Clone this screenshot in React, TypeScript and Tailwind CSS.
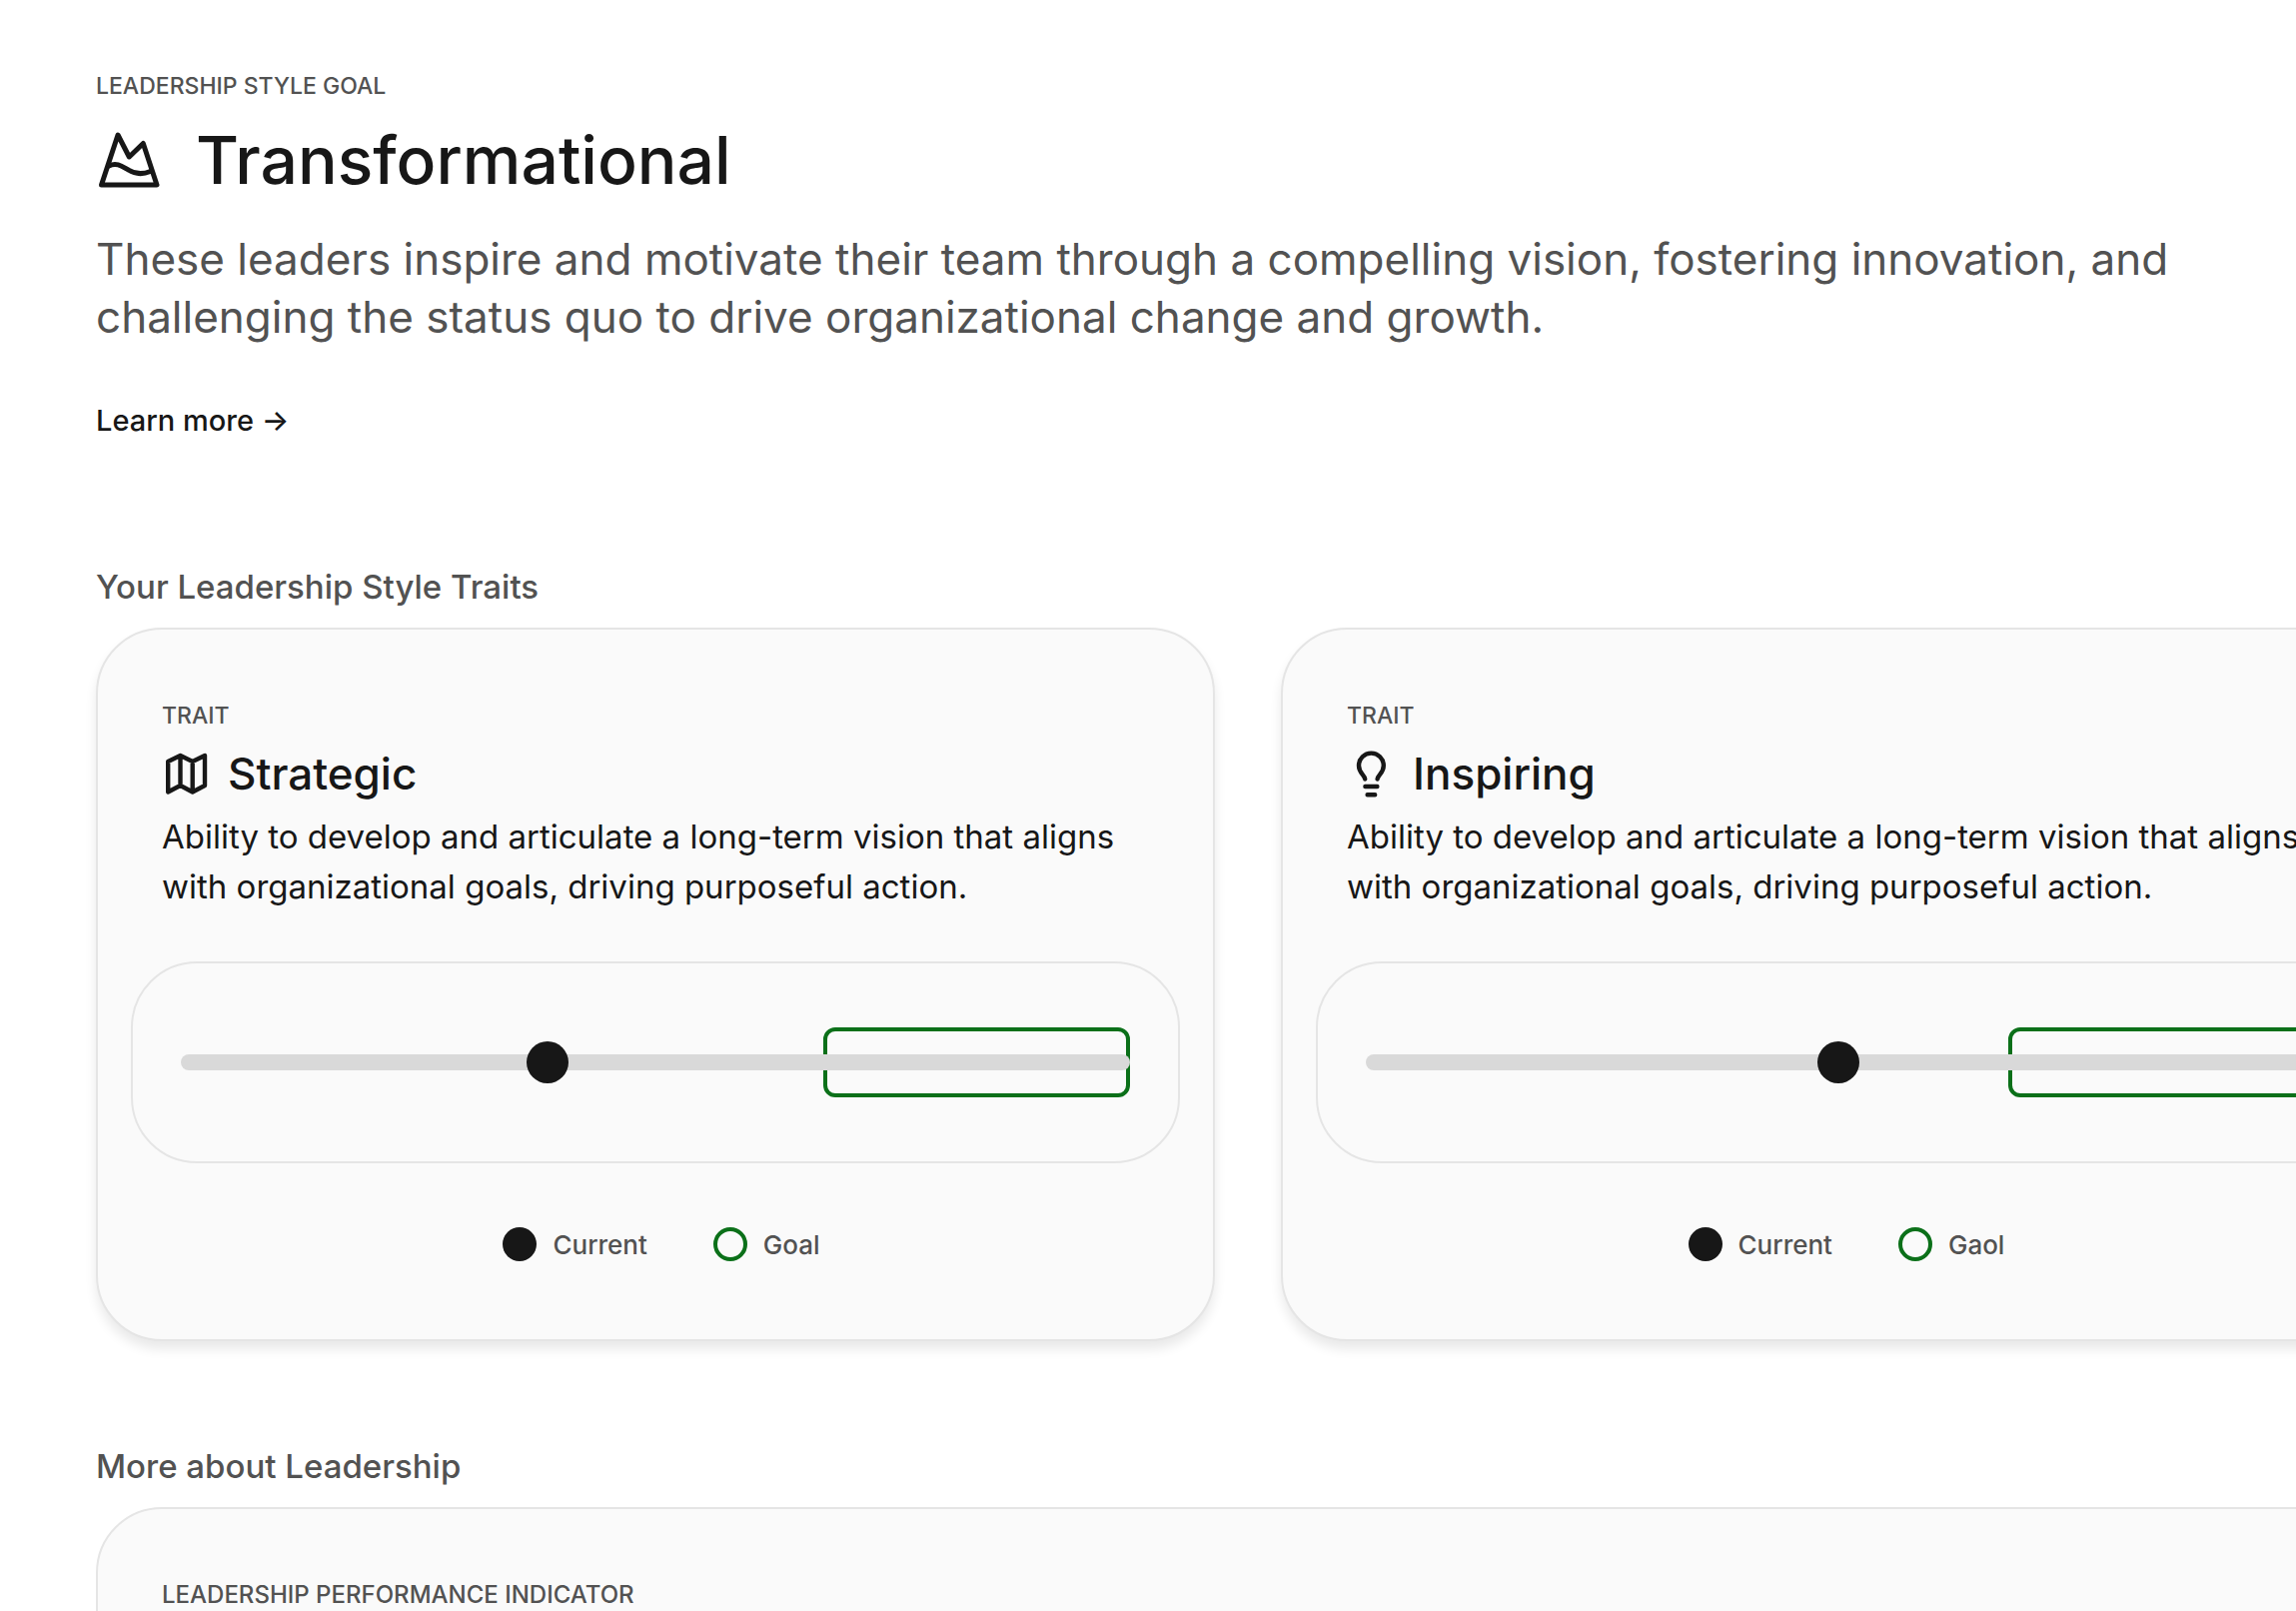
import React from "react";

type IconProps = { className?: string };

function MountainIcon({ className }: IconProps) {
  return (
    <svg viewBox="0 0 64 56" fill="none" stroke="currentColor" strokeWidth="5" strokeLinecap="round" strokeLinejoin="round" className={className} aria-hidden="true">
      <path d="M5.500 53 L22 3 L33.300 25 L47.300 11.500 L61 53 Z" />
      <path d="M13 34 C21 30 27 35 32.500 38 C38 41.500 46 43 54.500 39.500" />
    </svg>
  );
}

function MapIcon({ className }: IconProps) {
  return (
    <svg viewBox="0 0 50 50" fill="none" stroke="currentColor" strokeWidth="4.400" strokeLinecap="round" strokeLinejoin="round" className={className} aria-hidden="true">
      <path d="M6.200 13 L18.500 7 L30.700 13 L43 7 V37 L30.700 43.500 L18.500 37 L6.200 43.500 Z M18.500 7 V37 M30.700 13 V43" />
    </svg>
  );
}

function BulbIcon({ className }: IconProps) {
  return (
    <svg viewBox="0 0 50 50" fill="none" stroke="currentColor" strokeWidth="4.400" strokeLinecap="round" strokeLinejoin="round" className={className} aria-hidden="true">
      <path d="M18.200 30.500 C17.500 26 12 24.500 12 17 A12.400 12.400 0 0 1 36.800 17 C36.800 24.500 31.300 26 30.600 30.500 M18.400 38 H30.400 M20.600 46.300 H28.200" />
    </svg>
  );
}

type Trait = { name: string; icon: React.ReactNode; current: string; goalLabel: string };

const traits: Trait[] = [
  { name: "Strategic", icon: <MapIcon className="size-[50px]" />, current: "38.6%", goalLabel: "Goal" },
  { name: "Inspiring", icon: <BulbIcon className="size-[50px]" />, current: "49.8%", goalLabel: "Gaol" },
];

function TraitCard({ trait }: { trait: Trait }) {
  return (
    <article className="w-[1120px] shrink-0 rounded-[66px] border-2 border-[#e5e5e5] bg-[#fafafa] px-[33px] pt-[66px] pb-[78px] shadow-[0_8px_12px_rgba(0,0,0,0.09)]">
      <div className="px-[31px]">
        <p className="text-[23px] leading-[40px] font-medium text-[#525252]">TRAIT</p>
        <div className="mt-[10px] flex items-center gap-4">
          {trait.icon}
          <h3 className="text-[44px] leading-[56px] font-medium">{trait.name}</h3>
        </div>
        <p className="mt-[10px] text-[33px] leading-[50px]">
          Ability to develop and articulate a long-term vision that aligns with organizational goals, driving purposeful action.
        </p>
      </div>
      <div className="mt-[50px] rounded-[66px] border-2 border-[#e5e5e5] px-12 py-16">
        <div className="relative flex h-[70px] items-center">
          <div className="absolute right-0 h-full w-[307px] rounded-xl border-4 border-[#0b7019]" />
          <div className="relative h-4 w-full rounded-full bg-[#d9d9d9]" />
          <div className="absolute size-[42px] -translate-x-1/2 rounded-full bg-[#171717]" style={{ left: trait.current }} />
        </div>
      </div>
      <div className="mt-16 flex h-[34px] items-center justify-center gap-[66px] pl-3 text-[26px] font-medium text-[#525252]">
        <span className="flex items-center gap-4">
          <span className="size-[34px] rounded-full bg-[#171717]" />
          Current
        </span>
        <span className="flex items-center gap-4">
          <span className="size-[34px] rounded-full border-4 border-[#0b7019]" />
          {trait.goalLabel}
        </span>
      </div>
    </article>
  );
}

export default function App() {
  return (
    <main className="h-screen overflow-hidden bg-white px-24 pt-[66px] font-['Inter',sans-serif] text-[#171717]">
      <header>
        <p className="text-[23px] leading-[40px] font-medium text-[#525252]">LEADERSHIP STYLE GOAL</p>
        <div className="mt-[14px] flex items-center gap-9">
          <MountainIcon className="h-14 w-16" />
          <h1 className="text-[66px] leading-[80px] font-medium">Transformational</h1>
        </div>
        <p className="mt-[30px] text-[44px] leading-[58px] text-[#525252]">
          These leaders inspire and motivate their team through a compelling vision, fostering innovation, and challenging the status quo to drive organizational change and growth.
        </p>
        <a href="#more" className="mt-[50px] inline-flex text-[29px] leading-[50px] font-medium">Learn more →</a>
      </header>
      <section className="mt-[116px]">
        <h2 className="text-[33px] leading-[50px] font-medium text-[#525252]">Your Leadership Style Traits</h2>
        <div className="mt-4 flex gap-[66px]">
          {traits.map((t) => (
            <TraitCard key={t.name} trait={t} />
          ))}
        </div>
      </section>
      <section id="more" className="mt-[100px]">
        <h2 className="text-[33px] leading-[50px] font-medium text-[#525252]">More about Leadership</h2>
        <div className="mt-4 -mr-40 rounded-[66px] border-2 border-[#e5e5e5] bg-[#fafafa] px-16 py-[66px]">
          <p className="text-[24px] leading-[40px] font-medium text-[#525252]">LEADERSHIP PERFORMANCE INDICATOR</p>
        </div>
      </section>
    </main>
  );
}
